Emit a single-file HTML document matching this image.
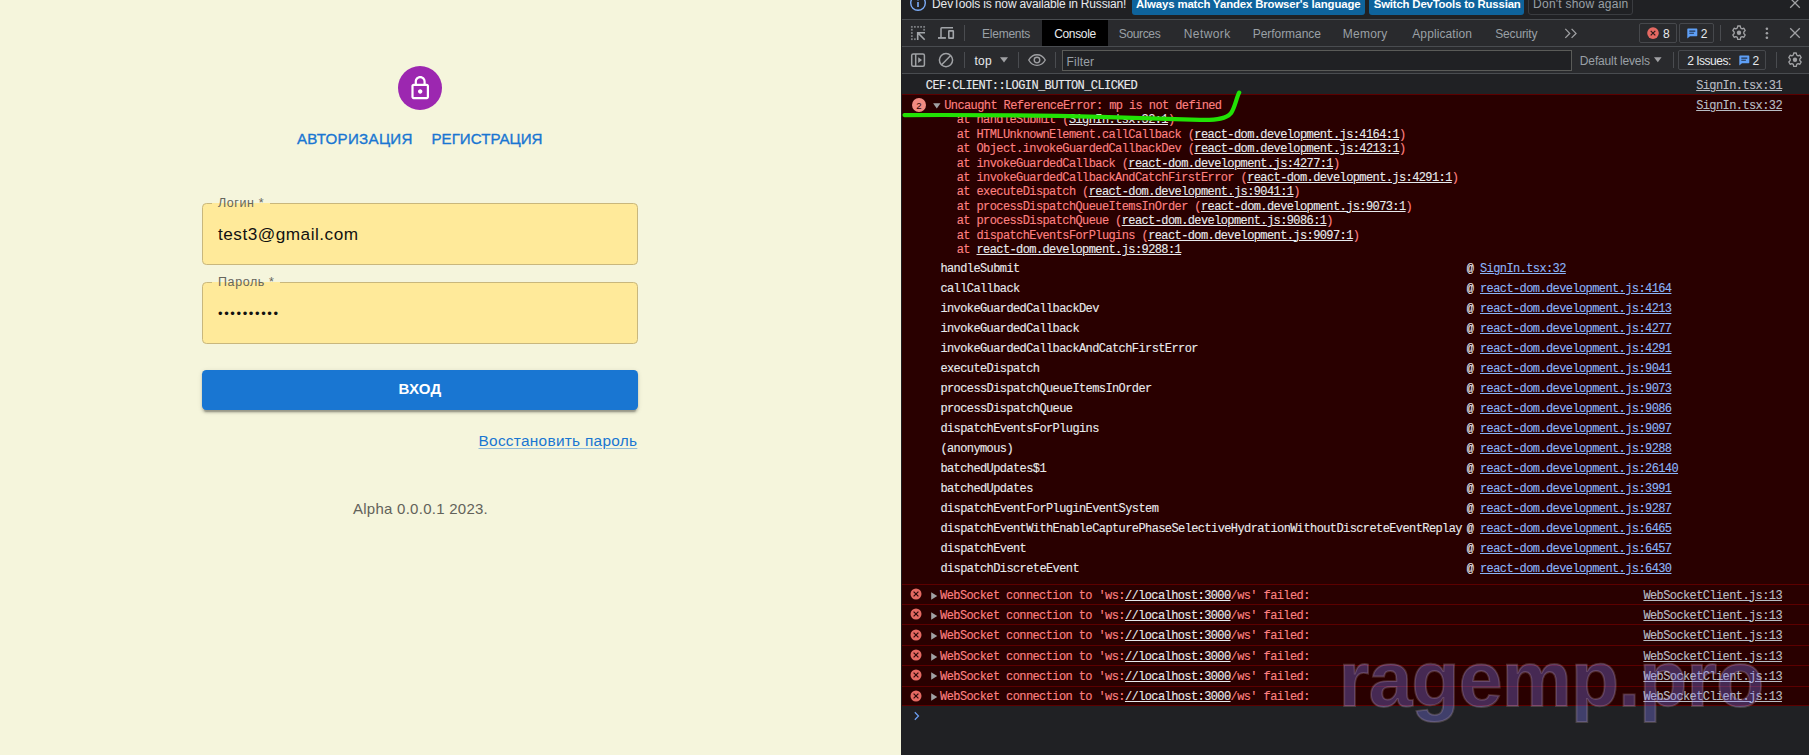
<!DOCTYPE html>
<html lang="ru">
<head>
<meta charset="utf-8">
<title>Login</title>
<style>
*{box-sizing:border-box;margin:0;padding:0}
html,body{width:1809px;height:755px;overflow:hidden;background:#202124}
body{position:relative;font-family:"Liberation Sans",sans-serif}

/* ---------- left app panel ---------- */
#app{position:absolute;left:0;top:0;width:901px;height:755px;background:#f5f5dc;overflow:hidden}
#avatar{position:absolute;left:398px;top:66px;width:44px;height:44px;border-radius:50%;background:#9c27b0}
#avatar svg{position:absolute;left:8.8px;top:8.8px;width:26.4px;height:26.4px;fill:#fff}
.tab{position:absolute;top:128.5px;height:20px;line-height:20px;font-size:15.1px;color:#1976d2;-webkit-text-stroke:.35px #1976d2;white-space:nowrap}
.field{position:absolute;left:202px;width:436px;height:62px;border:1px solid #c9b77c;border-radius:4.4px;background:#ffea9a}
.field .lbl{position:absolute;left:9px;top:-9px;height:16px;line-height:16px;padding:0 5.5px 0 6px;font-size:12.5px;letter-spacing:.6px;color:#66665c;white-space:nowrap}
.field .lbl i{position:absolute;left:0;right:0;top:8px;height:1px;background:#ffea9a;z-index:0}
.field .lbl b{position:relative;font-weight:normal;z-index:1}
.field .val{position:absolute;left:15px;top:17.6px;height:24px;line-height:24px;font-size:17.2px;letter-spacing:.5px;color:#111;white-space:nowrap}
#btn{position:absolute;left:202px;top:370px;width:436px;height:40px;border-radius:4.4px;background:#1976d2;color:#fff;text-align:center;line-height:37px;font-size:15px;font-weight:bold;letter-spacing:.2px;box-shadow:0 3.3px 1.1px -2.2px rgba(0,0,0,.2),0 2.2px 2.2px 0 rgba(0,0,0,.14),0 1.1px 5.5px 0 rgba(0,0,0,.12)}
#forgot{position:absolute;top:431px;height:20px;line-height:20px;font-size:15.4px;letter-spacing:.28px;color:#1976d2;text-decoration:underline;text-decoration-color:rgba(25,118,210,.45);text-underline-offset:1.5px;white-space:nowrap}
#ver{position:absolute;top:498.5px;height:20px;line-height:20px;font-size:15px;letter-spacing:.26px;color:#62625a;white-space:nowrap}
#edge{position:absolute;left:901px;top:0;width:1px;height:755px;background:#1f2023}

/* ---------- devtools panel ---------- */
#dt{position:absolute;left:902px;top:0;width:907px;height:755px;background:#202124;overflow:hidden;color:#e8eaed;font-size:12px}
.bar{position:absolute;left:0;width:907px;background:#292a2d;border-bottom:1px solid #494c50;overflow:hidden}
.t{position:absolute;white-space:nowrap;height:16px;line-height:16px}
.t.w{color:#e8eaed}
.t.wb{color:#fff;font-weight:bold}
.t.g{color:#9aa0a6}
.ic{position:absolute;display:block;overflow:visible}
.sep{position:absolute;width:1px;height:16px;background:#4a4c50}
.btn{position:absolute;border-radius:3px}
.btn.blue{background:#0e639c}
.btn.ghost{border:1px solid #3a3c40;background:transparent}
.cbox{position:absolute;border:1px solid #46484c;border-radius:2px}
#seltab{position:absolute;background:#000}
#filter{position:absolute;border:1px solid #5a5b58;background:#202124}
#msgs{position:absolute;left:0;top:0;width:907px;height:755px}
.row{position:absolute;left:0;width:907px}
.row.err{background:#290000;border-top:1px solid #5c0000;border-bottom:1px solid #5c0000}
.m{position:absolute;white-space:pre;font-family:"Liberation Mono",monospace;font-size:12px;letter-spacing:-.6px;color:#e8eaed;-webkit-text-stroke:.12px}
.m.e{color:#ff8080}
.m.w{color:#e8eaed}
.m.lnk{color:#b9bdc4}
.m a{text-decoration:underline;text-underline-offset:.5px;text-decoration-thickness:1px}
.m a.wl{color:#e8eaed}
.m a.bl{color:#8ab4f8}
.badge{position:absolute;width:14.4px;height:14.4px;border-radius:7.2px;background:#f28b82;color:#2a0505;font-size:9.6px;line-height:16.2px;text-align:center;margin:-.2px 0 0 -.2px}
#anno{position:absolute;left:0;top:0;pointer-events:none}
#wm{position:absolute;left:1338.8px;top:633.8px;font-size:78.5px;line-height:90px;font-weight:bold;letter-spacing:-.7px;color:rgba(130,124,248,.335);-webkit-text-stroke:1.8px rgba(235,200,205,.2);white-space:nowrap}
</style>
</head>
<body>
<div id="app">
  <div id="avatar"><svg viewBox="0 0 24 24"><path d="M18 8h-1V6c0-2.760-2.240-5-5-5S7 3.240 7 6v2H6c-1.100 0-2 .9-2 2v10c0 1.100.9 2 2 2h12c1.100 0 2-.9 2-2V10c0-1.100-.9-2-2-2zM9 6c0-1.660 1.340-3 3-3s3 1.340 3 3v2H9V6zm9 14H6V10h12v10zm-6-3c1.100 0 2-.9 2-2s-.9-2-2-2-2 .9-2 2 .9 2 2 2z"/></svg></div>
  <div class="tab" id="tab1" style="left:297px;letter-spacing:.3px">АВТОРИЗАЦИЯ</div>
  <div class="tab" id="tab2" style="left:431.5px;letter-spacing:.02px">РЕГИСТРАЦИЯ</div>

  <div class="field" id="f1" style="top:203px">
    <div class="lbl" id="l1"><i></i><b>Логин *</b></div>
    <div class="val" id="v1">test3@gmail.com</div>
  </div>
  <div class="field" id="f2" style="top:282px">
    <div class="lbl" id="l2"><i></i><b>Пароль *</b></div>
    <div class="val" id="v2" style="font-size:13px;letter-spacing:1.62px;top:18.5px">••••••••••</div>
  </div>

  <div id="btn"><span id="btnt">ВХОД</span></div>
  <div id="forgot" style="left:478.5px">Восстановить пароль</div>
  <div id="ver" style="left:353px">Alpha 0.0.0.1 2023.</div>
</div>

<div id="edge"></div>
<div id="dt">
<div class="bar" id="infobar" style="top:0;height:20px;background:#202124">
<svg class="ic" style="left:7px;top:-6px" width="18" height="18" viewBox="0 0 18 18"><circle cx="9" cy="9" r="7.300" fill="none" stroke="#7cacf8" stroke-width="1.400"/><rect x="8.200" y="8" width="1.600" height="5" fill="#7cacf8"/><circle cx="9" cy="5.600" r="1" fill="#7cacf8"/></svg>
<span class="t w" id="ib0" style="left:30.12px;top:-4.16px;font-size:12px;letter-spacing:-0.162px;">DevTools is now available in Russian!</span>
<div class="btn blue" style="left:230px;top:-8px;width:233px;height:23px"></div>
<span class="t wb" id="ib1" style="left:234.01px;top:-4.15px;font-size:11.4px;letter-spacing:-0.140px;">Always match Yandex Browser&#39;s language</span>
<div class="btn blue" style="left:467px;top:-8px;width:155px;height:23px"></div>
<span class="t wb" id="ib2" style="left:471.80px;top:-4.15px;font-size:11.4px;letter-spacing:-0.190px;">Switch DevTools to Russian</span>
<div class="btn ghost" style="left:626px;top:-8px;width:105px;height:23px"></div>
<span class="t g" id="ib3" style="left:631.10px;top:-4.36px;font-size:12px;letter-spacing:0.228px;">Don&#39;t show again</span>
<svg class="ic" style="left:887px;top:-3px" width="12" height="12" viewBox="0 0 12 12"><path d="M1.200 1.200l9.600 9.600M10.800 1.200l-9.600 9.600" stroke="#a0a1a4" stroke-width="1.300" fill="none"/></svg>
</div>
<div class="bar" id="tabbar" style="top:20px;height:27px">
<svg class="ic" style="left:7px;top:4px" width="18" height="18" viewBox="0 0 18 18"><g fill="#9c9fa3" opacity=".720"><rect x="1.94" y="1.96" width="1.800" height="1.800"/><rect x="4.98" y="1.96" width="1.800" height="1.800"/><rect x="8.17" y="1.96" width="1.800" height="1.800"/><rect x="11.20" y="1.96" width="1.800" height="1.800"/><rect x="14.25" y="1.96" width="1.800" height="1.800"/><rect x="1.94" y="4.85" width="1.800" height="1.800"/><rect x="1.94" y="8.05" width="1.800" height="1.800"/><rect x="1.94" y="11.24" width="1.800" height="1.800"/><rect x="1.94" y="14.28" width="1.800" height="1.800"/><rect x="14.25" y="4.85" width="1.800" height="1.800"/><rect x="4.98" y="14.28" width="1.800" height="1.800"/></g><path d="M16 8.700H8.700V15.900M8.900 8.900l6.800 6.800" stroke="#a2a5a9" stroke-width="1.600" fill="none"/></svg>
<svg class="ic" style="left:34px;top:4px" width="20" height="18" viewBox="0 0 20 18"><path d="M5 13.500V4.600a.8.800 0 0 1 .8-.8H17" stroke="#a2a5a9" stroke-width="1.500" fill="none"/><path d="M2 13.950h7.900" stroke="#a2a5a9" stroke-width="1.800" fill="none"/><rect x="12.800" y="6.860" width="4.500" height="7.240" rx=".4" stroke="#a2a5a9" stroke-width="1.600" fill="none"/></svg>
<i class="sep" style="left:62px;top:5px"></i>
<div id="seltab" style="left:140px;top:0;width:66px;height:26px"></div>
<span class="t g" id="tb1" style="left:80.10px;top:5.74px;font-size:12px;letter-spacing:-0.257px;">Elements</span>
<span class="t w" id="tb2" style="left:152.26px;top:5.74px;font-size:12px;letter-spacing:-0.360px;">Console</span>
<span class="t g" id="tb3" style="left:216.86px;top:5.74px;font-size:12px;letter-spacing:-0.374px;">Sources</span>
<span class="t g" id="tb4" style="left:281.72px;top:5.74px;font-size:12px;letter-spacing:0.420px;">Network</span>
<span class="t g" id="tb5" style="left:350.72px;top:5.74px;font-size:12px;letter-spacing:-0.054px;">Performance</span>
<span class="t g" id="tb6" style="left:440.69px;top:5.74px;font-size:12px;letter-spacing:0.270px;">Memory</span>
<span class="t g" id="tb7" style="left:510.26px;top:5.74px;font-size:12px;letter-spacing:0.108px;">Application</span>
<span class="t g" id="tb8" style="left:593.24px;top:5.74px;font-size:12px;letter-spacing:-0.154px;">Security</span>
<svg class="ic" style="left:662px;top:8px" width="14" height="11" viewBox="0 0 14 11"><path d="M1.300 .900l4.400 4.500-4.400 4.500M7.600 .900l4.400 4.500-4.400 4.500" stroke="#a0a1a4" stroke-width="1.300" fill="none"/></svg>
<div class="cbox" style="left:737px;top:3px;width:38px;height:20px"></div>
<svg class="ic" style="left:744px;top:6px" width="14" height="14" viewBox="0 0 14 14"><circle cx="7" cy="7.100" r="5.800" fill="#e46962"/><path d="M4.700 4.800l4.600 4.600M9.300 4.800l-4.600 4.600" stroke="#2a1a1a" stroke-width="1.200"/></svg>
<span class="t w" id="c8" style="left:761.00px;top:5.59px;font-size:12px;letter-spacing:0.000px;">8</span>
<div class="cbox" style="left:777px;top:3px;width:35px;height:20px"></div>
<svg class="ic" style="left:784.5999999999999px;top:7.700px" width="11" height="11" viewBox="0 0 11 11"><path d="M1 .500h8.600a.7.700 0 0 1 .7.700v6.400a.7.700 0 0 1-.7.700H3L.3 10.600V1.200A.7.700 0 0 1 1 .500z" fill="#5e9ff6"/><path d="M2.300 3.100h6M2.300 5.300h4.600" stroke="#23344f" stroke-width="1.100"/></svg>
<span class="t w" id="c2" style="left:798.80px;top:5.59px;font-size:12px;letter-spacing:0.000px;">2</span>
<i class="sep" style="left:818px;top:5px"></i>
<svg class="ic" style="left:829px;top:5px" width="16" height="15.700" viewBox="0 0 16 15" preserveAspectRatio="none"><path fill="none" stroke="#a0a1a4" stroke-width="1.300" stroke-linejoin="round" d="M6.700 1h2.600l.4 1.900 1.400.8 1.800-.6 1.300 2.200-1.400 1.300v1.600l1.400 1.300-1.300 2.200-1.800-.6-1.400.8-.4 1.900H6.700l-.4-1.900-1.400-.8-1.800.6-1.300-2.200 1.400-1.300V6.600L1.800 5.300l1.300-2.200 1.800.6 1.400-.8z"/><circle cx="8" cy="7.400" r="2.200" fill="#a0a1a4"/></svg>
<svg class="ic" style="left:862px;top:7px" width="6" height="13" viewBox="0 0 6 13"><circle cx="2.900" cy="1.700" r="1.300" fill="#a0a1a4"/><circle cx="2.900" cy="6.200" r="1.300" fill="#a0a1a4"/><circle cx="2.900" cy="10.700" r="1.300" fill="#a0a1a4"/></svg>
<svg class="ic" style="left:887px;top:7.200px" width="12" height="12" viewBox="0 0 12 12"><path d="M1.200 1.200l9.600 9.600M10.800 1.200l-9.600 9.600" stroke="#a0a1a4" stroke-width="1.300" fill="none"/></svg>
</div>
<div class="bar" id="ctool" style="top:47px;height:27px">
<svg class="ic" style="left:8px;top:5px" width="16" height="16" viewBox="0 0 16 16"><rect x="1.700" y="2" width="12.700" height="12.200" rx="1.500" stroke="#a0a2a5" stroke-width="1.500" fill="none"/><path d="M5.700 2v12" stroke="#a0a2a5" stroke-width="1.500"/><path d="M8.200 5.200l3.800 2.900-3.800 2.900z" fill="#a0a2a5"/></svg>
<svg class="ic" style="left:36px;top:5px" width="16" height="16" viewBox="0 0 16 16"><circle cx="8" cy="8.100" r="6.600" stroke="#a0a2a5" stroke-width="1.500" fill="none"/><path d="M3.400 12.900l9.300-9.500" stroke="#a0a2a5" stroke-width="1.500"/></svg>
<i class="sep" style="left:62px;top:5px"></i>
<span class="t w" id="top" style="left:72.38px;top:5.54px;font-size:12px;letter-spacing:0.360px;">top</span>
<svg class="ic" style="left:98px;top:10px" width="8" height="6" viewBox="0 0 8 6"><path d="M0 .200h8L4 5.400z" fill="#a0a1a4"/></svg>
<i class="sep" style="left:116px;top:5px"></i>
<svg class="ic" style="left:125px;top:6px" width="20" height="14" viewBox="0 0 20 14"><path d="M1.750 7C3.700 3.400 6.600 1.700 10 1.700S16.300 3.400 18.250 7C16.300 10.600 13.400 12.300 10 12.300S3.700 10.600 1.750 7z" stroke="#a0a1a4" stroke-width="1.350" fill="none"/><circle cx="10" cy="7" r="2.800" stroke="#a0a1a4" stroke-width="1.350" fill="none"/></svg>
<i class="sep" style="left:153px;top:5px"></i>
<div id="filter" style="left:160px;top:3px;width:510px;height:21px"></div>
<span class="t g" id="flt" style="left:164.60px;top:6.84px;font-size:12px;letter-spacing:0.144px;">Filter</span>
<span class="t g" id="lev" style="left:677.86px;top:6.14px;font-size:12px;letter-spacing:-0.153px;">Default levels</span>
<svg class="ic" style="left:752.2px;top:10px" width="8" height="6" viewBox="0 0 8 6"><path d="M0 .200h7.600L3.800 5.200z" fill="#a0a1a4"/></svg>
<i class="sep" style="left:771px;top:5px"></i>
<div class="cbox" style="left:776px;top:3px;width:88px;height:20px"></div>
<span class="t w" id="iss" style="left:785.24px;top:5.94px;font-size:12px;letter-spacing:-0.493px;">2 Issues:</span>
<svg class="ic" style="left:836.7px;top:7.800px" width="11" height="11" viewBox="0 0 11 11"><path d="M1 .500h8.600a.7.700 0 0 1 .7.700v6.400a.7.700 0 0 1-.7.700H3L.3 10.600V1.200A.7.700 0 0 1 1 .500z" fill="#5e9ff6"/><path d="M2.300 3.100h6M2.300 5.300h4.600" stroke="#23344f" stroke-width="1.100"/></svg>
<span class="t w" id="iss2" style="left:850.60px;top:5.94px;font-size:12px;letter-spacing:0.000px;">2</span>
<i class="sep" style="left:874px;top:5px"></i>
<svg class="ic" style="left:885px;top:5px" width="16" height="15.700" viewBox="0 0 16 15" preserveAspectRatio="none"><path fill="none" stroke="#a0a1a4" stroke-width="1.300" stroke-linejoin="round" d="M6.700 1h2.600l.4 1.900 1.400.8 1.800-.6 1.300 2.200-1.400 1.300v1.600l1.400 1.300-1.300 2.200-1.800-.6-1.400.8-.4 1.900H6.700l-.4-1.900-1.400-.8-1.800.6-1.300-2.200 1.400-1.300V6.600L1.800 5.300l1.300-2.200 1.800.6 1.400-.8z"/><circle cx="8" cy="7.400" r="2.200" fill="#a0a1a4"/></svg>
</div>
<div id="msgs">
<div class="row log" style="top:74px;height:20px"></div>
<div class="m " id="cef" style="left:23.80px;top:79.10px;line-height:14.4px;">CEF:CLIENT::LOGIN_BUTTON_CLICKED</div>
<div class="m lnk" id="r31" style="right:27.00px;top:79.00px;line-height:14.400px"><a>SignIn.tsx:31</a></div>
<div class="row err" style="top:94px;height:491px"></div>
<div class="badge" style="left:10px;top:98px">2</div>
<svg class="ic" style="left:31px;top:103px" width="8" height="6" viewBox="0 0 8 6"><path d="M.100 .200h7.400L3.800 5.400z" fill="#a0a1a4"/></svg>
<div class="m lnk" id="r32" style="right:27.00px;top:98.80px;line-height:14.400px"><a>SignIn.tsx:32</a></div>
<div class="m e" id="st0" style="left:42.20px;top:99.05px;line-height:14.4px;">Uncaught ReferenceError: mp is not defined</div>
<div class="m e" id="st1" style="left:54.70px;top:113.45px;line-height:14.4px;">at handleSubmit (<a class="wl">SignIn.tsx:32:1</a>)</div>
<div class="m e" id="st2" style="left:54.70px;top:127.85px;line-height:14.4px;">at HTMLUnknownElement.callCallback (<a class="wl">react-dom.development.js:4164:1</a>)</div>
<div class="m e" id="st3" style="left:54.70px;top:142.25px;line-height:14.4px;">at Object.invokeGuardedCallbackDev (<a class="wl">react-dom.development.js:4213:1</a>)</div>
<div class="m e" id="st4" style="left:54.70px;top:156.65px;line-height:14.4px;">at invokeGuardedCallback (<a class="wl">react-dom.development.js:4277:1</a>)</div>
<div class="m e" id="st5" style="left:54.70px;top:171.05px;line-height:14.4px;">at invokeGuardedCallbackAndCatchFirstError (<a class="wl">react-dom.development.js:4291:1</a>)</div>
<div class="m e" id="st6" style="left:54.70px;top:185.45px;line-height:14.4px;">at executeDispatch (<a class="wl">react-dom.development.js:9041:1</a>)</div>
<div class="m e" id="st7" style="left:54.70px;top:199.85px;line-height:14.4px;">at processDispatchQueueItemsInOrder (<a class="wl">react-dom.development.js:9073:1</a>)</div>
<div class="m e" id="st8" style="left:54.70px;top:214.25px;line-height:14.4px;">at processDispatchQueue (<a class="wl">react-dom.development.js:9086:1</a>)</div>
<div class="m e" id="st9" style="left:54.70px;top:228.65px;line-height:14.4px;">at dispatchEventsForPlugins (<a class="wl">react-dom.development.js:9097:1</a>)</div>
<div class="m e" id="st10" style="left:54.70px;top:243.05px;line-height:14.4px;">at <a class="wl">react-dom.development.js:9288:1</a></div>
<div class="m w" id="fr0" style="left:38.40px;top:262.10px;line-height:14.4px;">handleSubmit</div>
<div class="m w" id="fl0" style="left:564.80px;top:262.10px;line-height:14.4px;">@ <a class="bl">SignIn.tsx:32</a></div>
<div class="m w" id="fr1" style="left:38.40px;top:282.10px;line-height:14.4px;">callCallback</div>
<div class="m w" id="fl1" style="left:564.80px;top:282.10px;line-height:14.4px;">@ <a class="bl">react-dom.development.js:4164</a></div>
<div class="m w" id="fr2" style="left:38.40px;top:302.10px;line-height:14.4px;">invokeGuardedCallbackDev</div>
<div class="m w" id="fl2" style="left:564.80px;top:302.10px;line-height:14.4px;">@ <a class="bl">react-dom.development.js:4213</a></div>
<div class="m w" id="fr3" style="left:38.40px;top:322.10px;line-height:14.4px;">invokeGuardedCallback</div>
<div class="m w" id="fl3" style="left:564.80px;top:322.10px;line-height:14.4px;">@ <a class="bl">react-dom.development.js:4277</a></div>
<div class="m w" id="fr4" style="left:38.40px;top:342.10px;line-height:14.4px;">invokeGuardedCallbackAndCatchFirstError</div>
<div class="m w" id="fl4" style="left:564.80px;top:342.10px;line-height:14.4px;">@ <a class="bl">react-dom.development.js:4291</a></div>
<div class="m w" id="fr5" style="left:38.40px;top:362.10px;line-height:14.4px;">executeDispatch</div>
<div class="m w" id="fl5" style="left:564.80px;top:362.10px;line-height:14.4px;">@ <a class="bl">react-dom.development.js:9041</a></div>
<div class="m w" id="fr6" style="left:38.40px;top:382.10px;line-height:14.4px;">processDispatchQueueItemsInOrder</div>
<div class="m w" id="fl6" style="left:564.80px;top:382.10px;line-height:14.4px;">@ <a class="bl">react-dom.development.js:9073</a></div>
<div class="m w" id="fr7" style="left:38.40px;top:402.10px;line-height:14.4px;">processDispatchQueue</div>
<div class="m w" id="fl7" style="left:564.80px;top:402.10px;line-height:14.4px;">@ <a class="bl">react-dom.development.js:9086</a></div>
<div class="m w" id="fr8" style="left:38.40px;top:422.10px;line-height:14.4px;">dispatchEventsForPlugins</div>
<div class="m w" id="fl8" style="left:564.80px;top:422.10px;line-height:14.4px;">@ <a class="bl">react-dom.development.js:9097</a></div>
<div class="m w" id="fr9" style="left:38.40px;top:442.10px;line-height:14.4px;">(anonymous)</div>
<div class="m w" id="fl9" style="left:564.80px;top:442.10px;line-height:14.4px;">@ <a class="bl">react-dom.development.js:9288</a></div>
<div class="m w" id="fr10" style="left:38.40px;top:462.10px;line-height:14.4px;">batchedUpdates$1</div>
<div class="m w" id="fl10" style="left:564.80px;top:462.10px;line-height:14.4px;">@ <a class="bl">react-dom.development.js:26140</a></div>
<div class="m w" id="fr11" style="left:38.40px;top:482.10px;line-height:14.4px;">batchedUpdates</div>
<div class="m w" id="fl11" style="left:564.80px;top:482.10px;line-height:14.4px;">@ <a class="bl">react-dom.development.js:3991</a></div>
<div class="m w" id="fr12" style="left:38.40px;top:502.10px;line-height:14.4px;">dispatchEventForPluginEventSystem</div>
<div class="m w" id="fl12" style="left:564.80px;top:502.10px;line-height:14.4px;">@ <a class="bl">react-dom.development.js:9287</a></div>
<div class="m w" id="fr13" style="left:38.40px;top:522.10px;line-height:14.4px;">dispatchEventWithEnableCapturePhaseSelectiveHydrationWithoutDiscreteEventReplay</div>
<div class="m w" id="fl13" style="left:564.80px;top:522.10px;line-height:14.4px;">@ <a class="bl">react-dom.development.js:6465</a></div>
<div class="m w" id="fr14" style="left:38.40px;top:542.10px;line-height:14.4px;">dispatchEvent</div>
<div class="m w" id="fl14" style="left:564.80px;top:542.10px;line-height:14.4px;">@ <a class="bl">react-dom.development.js:6457</a></div>
<div class="m w" id="fr15" style="left:38.40px;top:562.10px;line-height:14.4px;">dispatchDiscreteEvent</div>
<div class="m w" id="fl15" style="left:564.80px;top:562.10px;line-height:14.4px;">@ <a class="bl">react-dom.development.js:6430</a></div>
<div class="row err" style="top:584px;height:21px"></div>
<svg class="ic" style="left:7px;top:587.10px" width="14" height="14" viewBox="0 0 14 14"><circle cx="7" cy="7" r="5.500" fill="#e46962"/><path d="M4.600 4.600l4.800 4.800M9.400 4.600l-4.800 4.800" stroke="#2a0a0a" stroke-width="1.200"/></svg>
<svg class="ic" style="left:28.600000000000023px;top:591.50px" width="7" height="8" viewBox="0 0 7 8"><path d="M.200 .300v7.400L6.200 4z" fill="#a0a1a4"/></svg>
<div class="m e" id="ws0" style="left:38.10px;top:588.90px;line-height:14.4px;">WebSocket connection to &#39;ws:<a class="wl">//localhost:3000</a>/ws&#39; failed: </div>
<div class="m lnk" style="right:27.00px;top:588.90px;line-height:14.400px"><a>WebSocketClient.js:13</a></div>
<div class="row err" style="top:604px;height:21px"></div>
<svg class="ic" style="left:7px;top:607.40px" width="14" height="14" viewBox="0 0 14 14"><circle cx="7" cy="7" r="5.500" fill="#e46962"/><path d="M4.600 4.600l4.800 4.800M9.400 4.600l-4.800 4.800" stroke="#2a0a0a" stroke-width="1.200"/></svg>
<svg class="ic" style="left:28.600000000000023px;top:611.80px" width="7" height="8" viewBox="0 0 7 8"><path d="M.200 .300v7.400L6.200 4z" fill="#a0a1a4"/></svg>
<div class="m e" id="ws1" style="left:38.10px;top:608.90px;line-height:14.4px;">WebSocket connection to &#39;ws:<a class="wl">//localhost:3000</a>/ws&#39; failed: </div>
<div class="m lnk" style="right:27.00px;top:608.90px;line-height:14.400px"><a>WebSocketClient.js:13</a></div>
<div class="row err" style="top:624px;height:22px"></div>
<svg class="ic" style="left:7px;top:627.60px" width="14" height="14" viewBox="0 0 14 14"><circle cx="7" cy="7" r="5.500" fill="#e46962"/><path d="M4.600 4.600l4.800 4.800M9.400 4.600l-4.800 4.800" stroke="#2a0a0a" stroke-width="1.200"/></svg>
<svg class="ic" style="left:28.600000000000023px;top:632.00px" width="7" height="8" viewBox="0 0 7 8"><path d="M.200 .300v7.400L6.200 4z" fill="#a0a1a4"/></svg>
<div class="m e" id="ws2" style="left:38.10px;top:628.90px;line-height:14.4px;">WebSocket connection to &#39;ws:<a class="wl">//localhost:3000</a>/ws&#39; failed: </div>
<div class="m lnk" style="right:27.00px;top:628.90px;line-height:14.400px"><a>WebSocketClient.js:13</a></div>
<div class="row err" style="top:645px;height:21px"></div>
<svg class="ic" style="left:7px;top:648.40px" width="14" height="14" viewBox="0 0 14 14"><circle cx="7" cy="7" r="5.500" fill="#e46962"/><path d="M4.600 4.600l4.800 4.800M9.400 4.600l-4.800 4.800" stroke="#2a0a0a" stroke-width="1.200"/></svg>
<svg class="ic" style="left:28.600000000000023px;top:652.80px" width="7" height="8" viewBox="0 0 7 8"><path d="M.200 .300v7.400L6.200 4z" fill="#a0a1a4"/></svg>
<div class="m e" id="ws3" style="left:38.10px;top:649.90px;line-height:14.4px;">WebSocket connection to &#39;ws:<a class="wl">//localhost:3000</a>/ws&#39; failed: </div>
<div class="m lnk" style="right:27.00px;top:649.90px;line-height:14.400px"><a>WebSocketClient.js:13</a></div>
<div class="row err" style="top:665px;height:22px"></div>
<svg class="ic" style="left:7px;top:667.80px" width="14" height="14" viewBox="0 0 14 14"><circle cx="7" cy="7" r="5.500" fill="#e46962"/><path d="M4.600 4.600l4.800 4.800M9.400 4.600l-4.800 4.800" stroke="#2a0a0a" stroke-width="1.200"/></svg>
<svg class="ic" style="left:28.600000000000023px;top:672.20px" width="7" height="8" viewBox="0 0 7 8"><path d="M.200 .300v7.400L6.200 4z" fill="#a0a1a4"/></svg>
<div class="m e" id="ws4" style="left:38.10px;top:669.90px;line-height:14.4px;">WebSocket connection to &#39;ws:<a class="wl">//localhost:3000</a>/ws&#39; failed: </div>
<div class="m lnk" style="right:27.00px;top:669.90px;line-height:14.400px"><a>WebSocketClient.js:13</a></div>
<div class="row err" style="top:686px;height:20px"></div>
<svg class="ic" style="left:7px;top:689.00px" width="14" height="14" viewBox="0 0 14 14"><circle cx="7" cy="7" r="5.500" fill="#e46962"/><path d="M4.600 4.600l4.800 4.800M9.400 4.600l-4.800 4.800" stroke="#2a0a0a" stroke-width="1.200"/></svg>
<svg class="ic" style="left:28.600000000000023px;top:693.40px" width="7" height="8" viewBox="0 0 7 8"><path d="M.200 .300v7.400L6.200 4z" fill="#a0a1a4"/></svg>
<div class="m e" id="ws5" style="left:38.10px;top:689.90px;line-height:14.4px;">WebSocket connection to &#39;ws:<a class="wl">//localhost:3000</a>/ws&#39; failed: </div>
<div class="m lnk" style="right:27.00px;top:689.90px;line-height:14.400px"><a>WebSocketClient.js:13</a></div>
<svg class="ic" style="left:11px;top:711px" width="8" height="10" viewBox="0 0 8 10"><path d="M1.800 1.200l3.700 3.800-3.700 3.800" stroke="#6c9ef2" stroke-width="1.250" fill="none"/></svg>
</div>
</div>
<svg id="anno" width="1809" height="755" viewBox="0 0 1809 755"><path d="M904.500 115.100 C960 114.800 1040 115.400 1100 116.900 C1140 117.800 1175 119.100 1200 119.900 C1218 120.400 1226.500 118.600 1231 113.200 C1235 107.500 1236.300 98 1239.200 92.600" fill="none" stroke="#22e205" stroke-width="4.200" stroke-linecap="round" stroke-linejoin="round"/></svg>
<div id="wm">ragemp.pro</div>
</body>
</html>
